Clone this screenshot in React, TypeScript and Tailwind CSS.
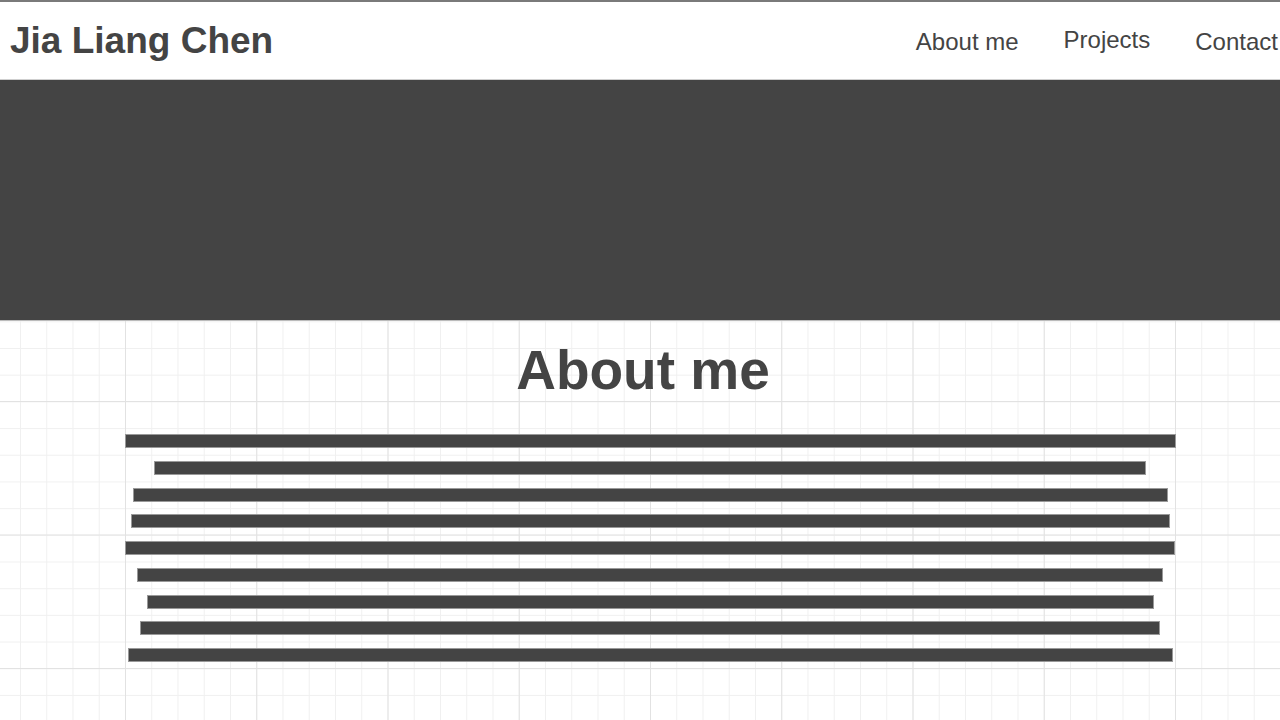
const bars = [1051, 992, 1035, 1039, 1050, 1026, 1007, 1020, 1045];

function App() {
  return (
    <div className="min-h-screen bg-white text-[#444] font-['Liberation_Sans',Arial,sans-serif] border-t-2 border-[#7a7a7a]">
      <header className="h-[78px] flex items-center justify-between pl-[10px] border-b border-[#cfcfcf]">
        <h1 className="text-[37px] font-bold leading-none">Jia Liang Chen</h1>
        <nav className="flex items-center gap-[45px] text-[24px] leading-none pr-[2px]">
          <a className="pt-[3px]">About me</a>
          <a className="pb-[1px]">Projects</a>
          <a className="pt-[3px]">Contact</a>
        </nav>
      </header>

      <section className="h-[240px] bg-[#444]"></section>

      <main className="h-[400px] border-t border-[#bbb] bg-[linear-gradient(to_right,#e2e2e2_1px,transparent_1px),linear-gradient(to_bottom,#e2e2e2_1px,transparent_1px),linear-gradient(to_right,#f0f0f0_1px,transparent_1px),linear-gradient(to_bottom,#f0f0f0_1px,transparent_1px)] bg-[size:131.25px_133.5px,131.25px_133.5px,26.25px_26.7px,26.25px_26.7px] bg-[position:125px_80px,125px_80px,20px_27px,20px_27px]">
        <h2 className="text-[55px] font-bold text-center pl-[6px] pt-[17px] leading-[64px]">About me</h2>
        <div className="flex flex-col items-center gap-[12.75px] pt-[32px] pl-[20px]">
          {bars.map((w, i) => (
            <div key={i} className="h-[14px] bg-[#444] border border-[#999]" style={{ width: w }} />
          ))}
        </div>
      </main>
    </div>
  );
}

export default App;
